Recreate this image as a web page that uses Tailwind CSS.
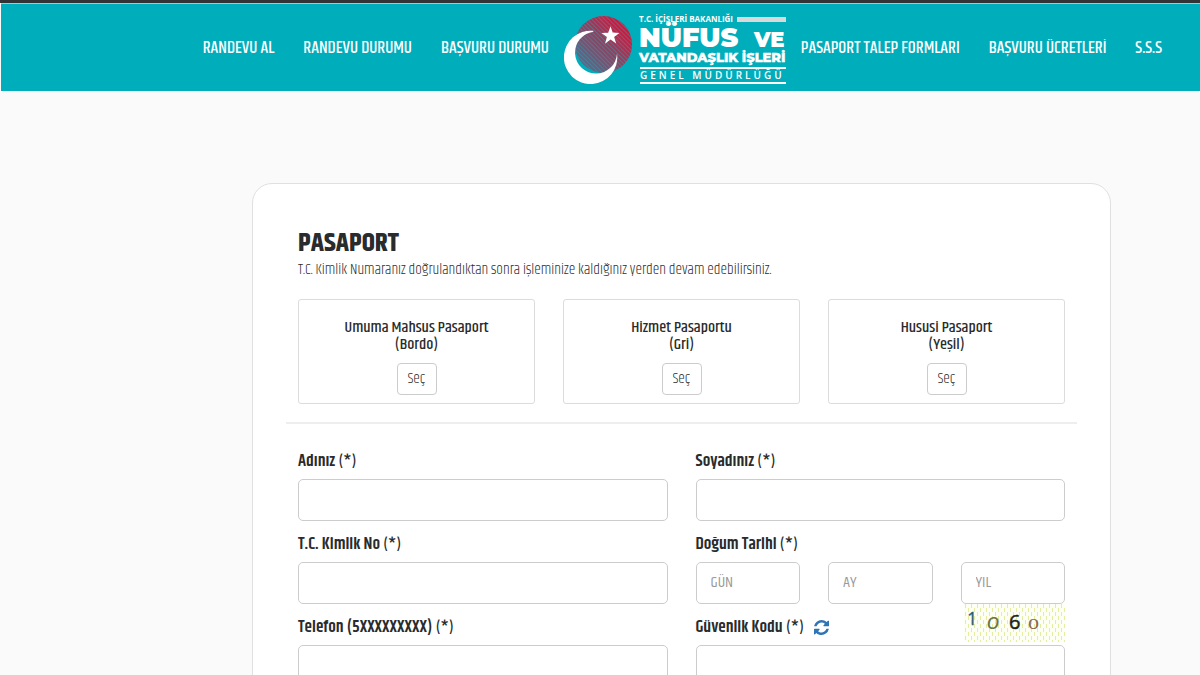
<!DOCTYPE html>
<html lang="tr">
<head>
<meta charset="utf-8">
<meta name="viewport" content="width=device-width, initial-scale=1">
<title>Pasaport Başvurusu</title>
<script src="https://cdn.jsdelivr.net/npm/@tailwindcss/browser@4"></script>
</head>
<body class="bg-[#fafafa] font-['Khand','Roboto_Condensed',sans-serif] text-[#292b2c]">
<header class="border-t-3 border-[#333335]">
  <nav class="ml-px flex h-[88px] items-center justify-end border-t border-[#8fd3da] bg-[#00adbb] pr-[38px] text-[17px] font-medium leading-6 text-white" aria-label="Ana menü">
    <div class="flex gap-[29px]">
      <a href="#">RANDEVU AL</a>
      <a href="#">RANDEVU DURUMU</a>
      <a href="#">BAŞVURU DURUMU</a>
    </div>
    <a href="#" class="mx-[15px] block" aria-label="Nüfus ve Vatandaşlık İşleri Genel Müdürlüğü">
      <svg width="222" height="72" viewBox="0 0 222 72" fill="#fff">
        <defs>
          <linearGradient id="red" x1="0" y1="1" x2="1" y2="0"><stop offset="0.1" stop-color="#4f6f8d"/><stop offset="0.5" stop-color="#93405f"/><stop offset="0.85" stop-color="#e00f35"/></linearGradient>
          <pattern id="hatch" width="3" height="3" patternUnits="userSpaceOnUse" patternTransform="rotate(45)"><rect width="3" height="1" fill="#2aa0b4" fill-opacity="0.5"/></pattern>
        </defs>
        <circle cx="39.5" cy="32.5" r="28.5" fill="url(#red)"/>
        <circle cx="39.5" cy="32.5" r="28.5" fill="url(#hatch)"/>
        <path d="M29.3 18.8A26.7 26.7 0 1 0 53 41.5A21 21 0 1 1 29.3 19.7Z"/>
        <path d="M46.6 14.2L48.6 20.6L55.4 20.9L50.1 24.9L52.2 31.4L46.5 27.6L41 31.7L42.9 25L37.4 21L44.2 20.7Z"/>
        <g font-family="Montserrat, 'DejaVu Sans', sans-serif">
          <text x="75" y="10" font-size="8" font-family="Open Sans, sans-serif" font-weight="700">T.C. İÇİŞLERİ BAKANLIĞI</text>
          <text x="75" y="35" font-size="27" font-weight="900">NÜFUS</text>
          <text x="190" y="35" font-size="21" font-weight="900">VE</text>
          <text x="75" y="50" font-size="13" font-weight="800" stroke="#fff" stroke-width="0.4">VATANDAŞLIK İŞLERİ</text>
          <text x="76" y="67" font-size="10" font-family="Open Sans, sans-serif" font-weight="600" letter-spacing="3">GENEL MÜDÜRLÜĞÜ</text>
        </g>
        <rect x="173" y="5" width="49" height="5" fill="#d9d9d9"/>
        <rect x="76" y="55" width="146" height="2"/>
        <rect x="76" y="70" width="146" height="2"/>
      </svg>
    </a>
    <div class="flex gap-[29px]">
      <a href="#">PASAPORT TALEP FORMLARI</a>
      <a href="#">BAŞVURU ÜCRETLERİ</a>
      <a href="#">S.S.S</a>
    </div>
  </nav>
</header>

<main class="mt-[92px] mr-[89px] mb-10 ml-[21%] rounded-[20px] border border-[#e0e0e0] bg-white px-[45px] pt-[46px] pb-12">
  <h1 class="text-[27px] font-bold leading-7">PASAPORT</h1>
  <p class="pt-[2px] text-[15px] font-light leading-5">T.C. Kimlik Numaranız doğrulandıktan sonra işleminize kaldığınız yerden devam edebilirsiniz.</p>

  <section class="mt-[19px] grid grid-cols-3 gap-7 text-center" aria-label="Pasaport türü">
    <div class="rounded-[3px] border border-[#dcdcdc] pt-[19px] pb-2">
      <h2 class="text-base font-medium leading-[17px]">Umuma Mahsus Pasaport<br>(Bordo)</h2>
      <button type="button" class="mt-[10px] h-8 w-10 rounded-[4px] border border-[#ccc] bg-white text-[15px] font-light leading-5">Seç</button>
    </div>
    <div class="rounded-[3px] border border-[#dcdcdc] pt-[19px] pb-2">
      <h2 class="text-base font-medium leading-[17px]">Hizmet Pasaportu<br>(Gri)</h2>
      <button type="button" class="mt-[10px] h-8 w-10 rounded-[4px] border border-[#ccc] bg-white text-[15px] font-light leading-5">Seç</button>
    </div>
    <div class="rounded-[3px] border border-[#dcdcdc] pt-[19px] pb-2">
      <h2 class="text-base font-medium leading-[17px]">Hususi Pasaport<br>(Yeşil)</h2>
      <button type="button" class="mt-[10px] h-8 w-10 rounded-[4px] border border-[#ccc] bg-white text-[15px] font-light leading-5">Seç</button>
    </div>
  </section>

  <hr class="-mx-3 mt-[18px] mb-[14px] border-t-2 border-[#eee]">

  <form class="grid grid-cols-2 gap-x-7 text-[17px] leading-5">
    <div>
      <div class="flex h-[41px] items-end pb-[7px]"><label for="ad"><b class="font-semibold">Adınız</b> <span class="text-base leading-5 font-medium">(*)</span></label></div>
      <input id="ad" type="text" class="block h-[42px] w-full rounded-[5px] border border-[#ccc] bg-white px-4">
    </div>
    <div>
      <div class="flex h-[41px] items-end pb-[7px]"><label for="soyad"><b class="font-semibold">Soyadınız</b> <span class="text-base leading-5 font-medium">(*)</span></label></div>
      <input id="soyad" type="text" class="block h-[42px] w-full rounded-[5px] border border-[#ccc] bg-white px-4">
    </div>
    <div>
      <div class="flex h-[41px] items-end pb-[7px]"><label for="tc"><b class="font-semibold">T.C. Kimlik No</b> <span class="text-base leading-5 font-medium">(*)</span></label></div>
      <input id="tc" type="text" class="block h-[42px] w-full rounded-[5px] border border-[#ccc] bg-white px-4">
    </div>
    <div>
      <div class="flex h-[41px] items-end pb-[7px]"><label for="gun"><b class="font-semibold">Doğum Tarihi</b> <span class="text-base leading-5 font-medium">(*)</span></label></div>
      <div class="grid grid-cols-3 gap-7 text-base">
        <input id="gun" type="text" placeholder="GÜN" class="block h-[42px] w-full rounded-[5px] border border-[#ccc] bg-white px-[14px] pb-px placeholder:text-[#999]">
        <input aria-label="Ay" type="text" placeholder="AY" class="block h-[42px] w-full rounded-[5px] border border-[#ccc] bg-white px-[14px] pb-px placeholder:text-[#999]">
        <input aria-label="Yıl" type="text" placeholder="YIL" class="block h-[42px] w-full rounded-[5px] border border-[#ccc] bg-white px-[14px] pb-px placeholder:text-[#999]">
      </div>
    </div>
    <div>
      <div class="flex h-[41px] items-end pb-[7px]"><label for="tel"><b class="font-semibold">Telefon (5XXXXXXXXX)</b> <span class="text-base leading-5 font-medium">(*)</span></label></div>
      <input id="tel" type="tel" class="block h-[42px] w-full rounded-[5px] border border-[#ccc] bg-white px-4">
    </div>
    <div>
      <div class="flex h-[41px] items-end">
        <label for="kod" class="pb-[7px]"><b class="font-semibold">Güvenlik Kodu</b> <span class="text-base leading-5 font-medium">(*)</span></label>
        <button type="button" class="mb-[10px] ml-[10px] text-[#2f74b5]" aria-label="Kodu yenile">
          <svg class="block" width="15" height="15" viewBox="0 0 1536 1536" fill="currentColor"><path d="M1511 928q0 5-1 7-64 268-268 434.500T764 1536q-146 0-282.500-55T238 1324l-129 129q-19 19-45 19t-45-19-19-45V960q0-26 19-45t45-19h448q26 0 45 19t19 45-19 45l-137 137q71 66 161 102t187 36q134 0 250-65t186-179q11-17 53-117 8-23 30-23h192q13 0 22.500 9.500t9.500 22.500zm25-800v448q0 26-19 45t-45 19h-448q-26 0-45-19t-19-45 19-45l138-138Q969 256 768 256q-134 0-250 65T332 500q-11 17-53 117-8 23-30 23H50q-13 0-22.500-9.500T18 608v-7q65-268 270-434.500T768 0q146 0 284 55.500T1297 212l130-129q19-19 45-19t45 19 19 45z"/></svg>
        </button>
        <svg class="ml-auto self-start" width="101" height="38" viewBox="0 0 101 38" role="img" aria-label="Güvenlik kodu">
          <defs>
            <pattern id="dashes" width="6" height="8" patternUnits="userSpaceOnUse">
              <path d="M1.500 0v4M4.500 4v4" stroke="#e3eea0" stroke-width="1" fill="none"/>
            </pattern>
          </defs>
          <rect width="101" height="38" fill="#fdfef4"/>
          <rect width="101" height="38" fill="url(#dashes)"/>
          <text x="3" y="21" font-family="Open Sans, sans-serif" font-size="18" fill="#1f6075" stroke="#1f6075" stroke-width="0.3">1</text>
          <text x="23" y="25" font-family="Liberation Sans, sans-serif" font-style="italic" font-size="22" fill="#6b7748">o</text>
          <text x="45" y="25" font-family="Open Sans, sans-serif" font-size="20" fill="#1c1f1c" stroke="#1c1f1c" stroke-width="0.5">6</text>
          <text x="64" y="25" font-family="Liberation Serif, serif" font-size="22" fill="#8a6a50">o</text>
        </svg>
      </div>
      <input id="kod" type="text" class="block h-[42px] w-full rounded-[5px] border border-[#ccc] bg-white px-4">
    </div>
  </form>
</main>
</body>
</html>
